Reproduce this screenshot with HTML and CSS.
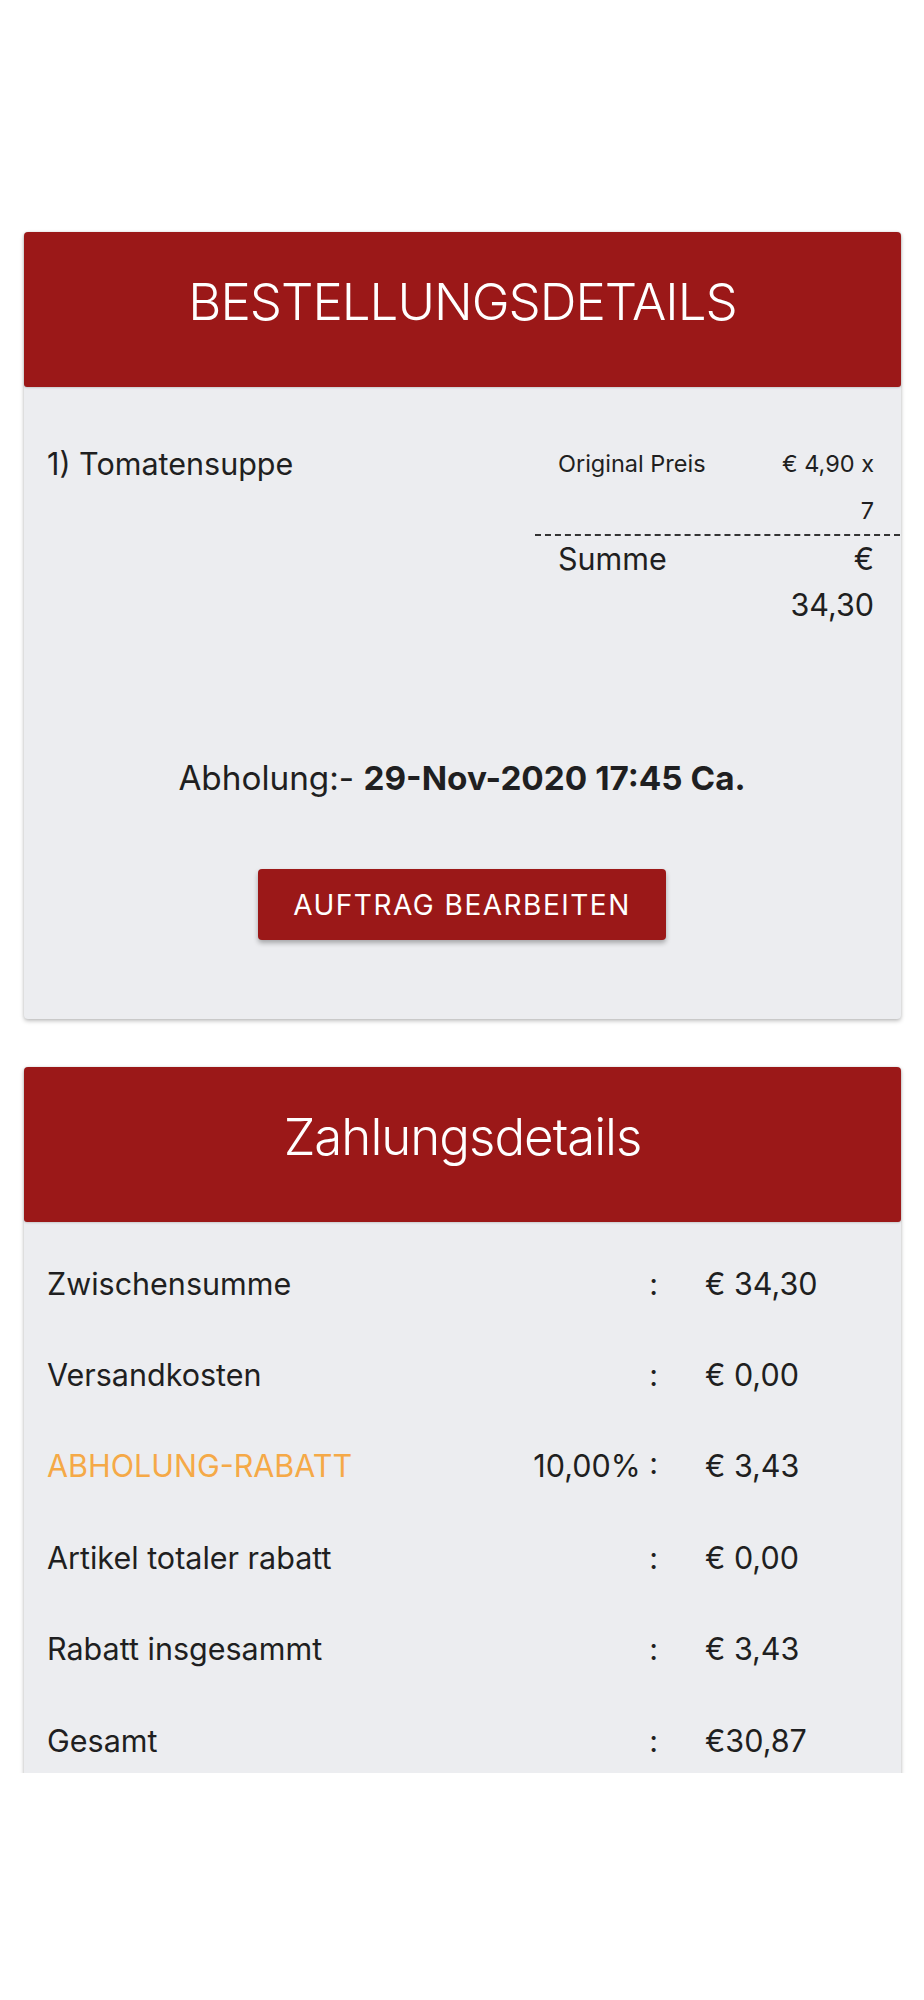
FILE: index.html
```html
<!DOCTYPE html>
<html lang="de">
<head>
    <meta charset="UTF-8">
    <meta name="viewport" content="width=device-width, initial-scale=1.0">
    <title>Bestellungsdetails</title>
    <link rel="stylesheet" href="styles.css">
</head>
<body>
    <div class="page">
        <div class="card">
            <div class="card-header">BESTELLUNGSDETAILS</div>
            <div class="card-body order">
                <div class="item">
                    <div class="item-name">1) Tomatensuppe</div>
                    <div class="item-prices">
                        <div class="price-row">
                            <span class="price-label">Original Preis</span>
                            <span class="price-value">€ 4,90 x 7</span>
                        </div>
                        <div class="price-row total">
                            <span class="price-label">Summe</span>
                            <span class="price-value">€ 34,30</span>
                        </div>
                    </div>
                </div>
                <div class="pickup">Abholung:- <b>29-Nov-2020 17:45 Ca.</b></div>
                <button class="edit-btn">AUFTRAG BEARBEITEN</button>
            </div>
        </div>

        <div class="card">
            <div class="card-header">Zahlungsdetails</div>
            <div class="card-body payment">
                <div class="pay-row">
                    <span class="pay-label">Zwischensumme</span>
                    <span class="pay-sep">:</span>
                    <span class="pay-value">€ 34,30</span>
                </div>
                <div class="pay-row">
                    <span class="pay-label">Versandkosten</span>
                    <span class="pay-sep">:</span>
                    <span class="pay-value">€ 0,00</span>
                </div>
                <div class="pay-row">
                    <span class="pay-label discount">ABHOLUNG-RABATT</span>
                    <span class="pay-sep">10,00% :</span>
                    <span class="pay-value">€ 3,43</span>
                </div>
                <div class="pay-row">
                    <span class="pay-label">Artikel totaler rabatt</span>
                    <span class="pay-sep">:</span>
                    <span class="pay-value">€ 0,00</span>
                </div>
                <div class="pay-row">
                    <span class="pay-label">Rabatt insgesammt</span>
                    <span class="pay-sep">:</span>
                    <span class="pay-value">€ 3,43</span>
                </div>
                <div class="pay-row">
                    <span class="pay-label">Gesamt</span>
                    <span class="pay-sep">:</span>
                    <span class="pay-value">€30,87</span>
                </div>
            </div>
        </div>
    </div>
</body>
</html>
```

FILE: styles.css
```css
body {
    margin: 0;
    background: #fff;
    font-family: Inter, "Noto Sans", sans-serif;
    color: #1f1f21;
}
.page {
    height: 1773px;
    overflow: hidden;
    padding: 232px 23px 0 24px;
    box-sizing: border-box;
}
.card {
    background-color: #ecedf0;
    border-radius: 4px;
    box-shadow: 0 2px 4px rgba(0, 0, 0, 0.25), 0 0 3px rgba(0, 0, 0, 0.08);
    margin-bottom: 48px;
}
.card-header {
    background-color: #9b1818;
    color: #fff;
    height: 155px;
    box-sizing: border-box;
    padding-top: 39px;
    font-size: 51px;
    font-weight: 300;
    letter-spacing: -1px;
    line-height: 62px;
    text-align: center;
    border-radius: 4px 4px 3px 3px;
    box-shadow: 0 1px 2px rgba(0, 0, 0, 0.15);
}
.card-body {
    padding: 0 24px 0 23px;
}
.order {
    padding-top: 53px;
    padding-bottom: 79px;
    text-align: center;
}
.item {
    display: flex;
    text-align: left;
}
.item-name {
    flex: 1;
    font-size: 30.5px;
    line-height: 47px;
}
.item-prices {
    width: 365px;
    margin-right: -23px;
}
.price-row {
    display: flex;
    padding: 0 26px 0 23px;
}
.price-label {
    flex: 1;
    font-size: 23.5px;
    line-height: 47px;
}
.price-value {
    width: 100px;
    text-align: right;
    font-size: 23.5px;
    line-height: 47px;
}
.price-row.total {
    border-top: 2px dashed #333;
}
.price-row.total .price-label,
.price-row.total .price-value {
    font-size: 30.5px;
    line-height: 46px;
}
.price-row.total .price-value {
    width: 110px;
}
.pickup {
    margin-top: 132px;
    font-size: 33.3px;
    line-height: 36px;
}
.pickup b {
    font-weight: 700;
}
.edit-btn {
    margin-top: 73px;
    height: 71px;
    padding: 0 35px;
    background-color: #9b1818;
    color: #fff;
    border: none;
    border-radius: 4px;
    font-family: Inter, sans-serif;
    font-size: 28px;
    letter-spacing: 1.5px;
    box-shadow: 0 3px 5px rgba(0, 0, 0, 0.3);
}
.payment {
    padding-top: 16px;
}
.pay-row {
    display: grid;
    grid-template-columns: 1fr auto 172px;
    align-items: center;
    height: 91.4px;
    font-size: 30.5px;
    line-height: 36px;
}
.pay-sep {
    text-align: right;
    padding-right: 47px;
}
.pay-label.discount {
    color: #f5a947;
}
```
